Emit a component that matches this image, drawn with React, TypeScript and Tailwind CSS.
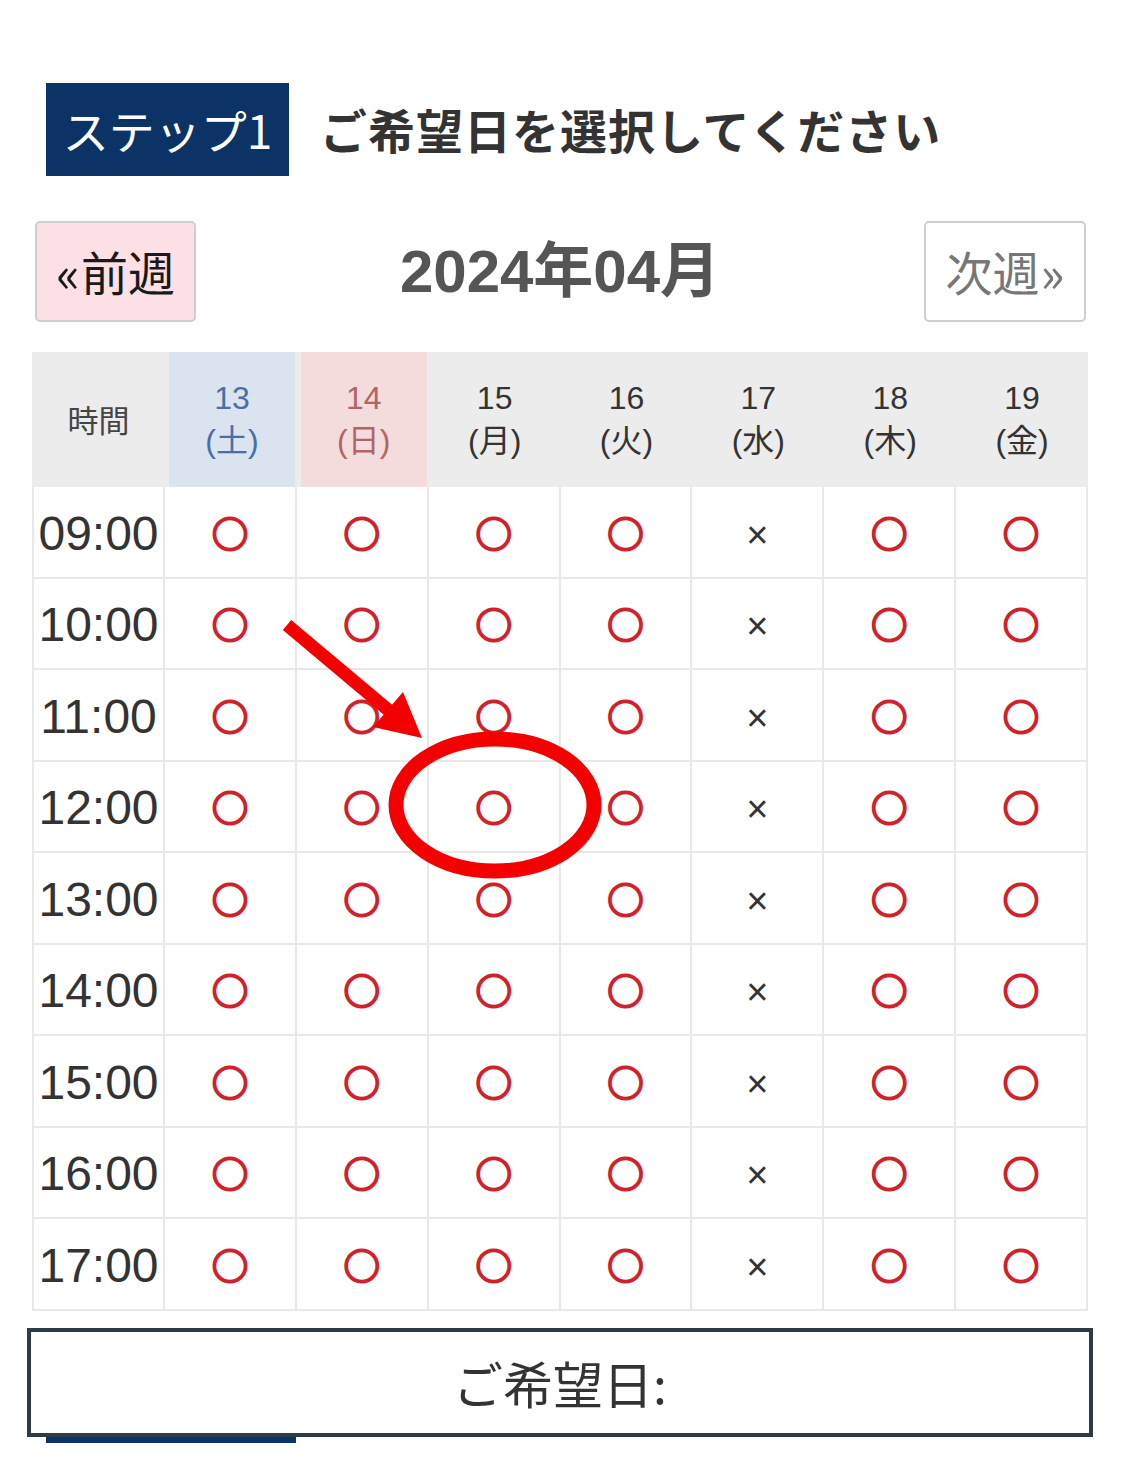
import React from "react";

const times = ["09:00", "10:00", "11:00", "12:00", "13:00", "14:00", "15:00", "16:00", "17:00"];
const days = [
  { d: "13", w: "土", kind: "sat" },
  { d: "14", w: "日", kind: "sun" },
  { d: "15", w: "月", kind: "" },
  { d: "16", w: "火", kind: "" },
  { d: "17", w: "水", kind: "" },
  { d: "18", w: "木", kind: "" },
  { d: "19", w: "金", kind: "" },
];

function Mark({ ok }: { ok: boolean }) {
  if (ok) {
    return (
      <span className="text-[36px] leading-none text-[#d0222c] font-['Noto_Sans_CJK_JP',sans-serif] [-webkit-text-stroke:2.4px_#d0222c]">
        ○
      </span>
    );
  }
  return <span className="text-[38px] leading-none text-[#333] font-['Liberation_Sans',sans-serif] mt-[6px]">×</span>;
}

export default function App() {
  return (
    <div className="relative w-[1121px] h-[1465px] bg-white overflow-hidden font-['Liberation_Sans','Noto_Sans_CJK_JP',sans-serif]">
      <div className="pt-[83px]">
        {/* step row */}
        <div className="flex items-center">
          <div className="ml-[46px] w-[243px] h-[93px] bg-[#0c3366] flex items-center justify-center text-white text-[46px] font-['Noto_Sans_CJK_JP',sans-serif]">
            ステップ1
          </div>
          <div className="ml-[31px] text-[47px] tracking-[1px] font-bold text-[#333] font-['Noto_Sans_CJK_JP',sans-serif]">
            ご希望日を選択してください
          </div>
        </div>

        {/* week nav */}
        <div className="mt-[45px] flex items-center px-[35px]">
          <div className="w-[161px] h-[101px] bg-[#fde0e6] border-2 border-[#cfcfcf] rounded-[5px] flex items-center justify-center text-[47px] text-[#1a1a1a] font-['Noto_Sans_CJK_JP',sans-serif]">
            <span className="text-[50px] mr-[1px]">«</span>前週
          </div>
          <div className="flex-1 text-center text-[60px] font-bold text-[#555] leading-none">2024年04月</div>
          <div className="w-[162px] h-[101px] bg-white border-2 border-[#cfcfcf] rounded-[5px] flex items-center justify-center text-[47px] text-[#777] font-['Noto_Sans_CJK_JP',sans-serif]">
            次週<span className="text-[50px] ml-[1px]">»</span>
          </div>
        </div>

        {/* table */}
        <div className="mt-[30px] ml-[32px] w-[1056px]">
          <div className="grid grid-cols-[133px_repeat(7,1fr)] h-[135px] bg-[#ececec]">
            <div className="flex items-center justify-center text-[31px] text-[#444] font-['Noto_Sans_CJK_JP',sans-serif]">
              時間
            </div>
            {days.map((day) => (
              <div
                key={day.d}
                className={
                  day.kind === "sat"
                    ? "ml-[4px] mr-[2px] bg-[#d9e4ef] text-[#4a6fa8] flex flex-col items-center justify-center text-[32px] leading-[43px]"
                    : day.kind === "sun"
                    ? "ml-[4px] mr-[2px] bg-[#f3dcdb] text-[#b36464] flex flex-col items-center justify-center text-[32px] leading-[43px]"
                    : "text-[#333] flex flex-col items-center justify-center text-[32px] leading-[43px]"
                }
              >
                <span>{day.d}</span>
                <span>({day.w})</span>
              </div>
            ))}
          </div>
          <div className="border-l-2 border-[#e8e8e8]">
            {times.map((t) => (
              <div key={t} className="grid grid-cols-[131px_repeat(7,1fr)] h-[91.5px]">
                <div className="flex items-center justify-center pt-[4px] text-[48px] text-[#333] border-r-2 border-b-2 border-[#e8e8e8]">
                  {t}
                </div>
                {days.map((day, i) => (
                  <div
                    key={day.d}
                    className="flex items-center justify-center border-r-2 border-b-2 border-[#e8e8e8]"
                  >
                    <Mark ok={i !== 4} />
                  </div>
                ))}
              </div>
            ))}
          </div>
        </div>

        {/* selected date box */}
        <div className="mt-[17px] ml-[27px] w-[1066px] h-[109px] border-4 border-[#2e3a48] bg-white flex items-center justify-center text-[50px] text-[#333] font-['Noto_Sans_CJK_JP',sans-serif]">
          ご希望日:
        </div>
        <div className="ml-[46px] w-[250px] h-[6px] bg-[#0c3366]"></div>
      </div>

      {/* annotation overlay */}
      <svg
        className="absolute left-0 top-0 pointer-events-none"
        width="1121"
        height="1465"
        viewBox="0 0 1121 1465"
      >
        <line x1="287" y1="625" x2="393" y2="714" stroke="#f50000" strokeWidth="13" />
        <polygon points="403,692 422,738 373,727" fill="#f50000" />
        <ellipse cx="495" cy="805" rx="99" ry="66" fill="none" stroke="#f50000" strokeWidth="15" />
      </svg>
    </div>
  );
}
